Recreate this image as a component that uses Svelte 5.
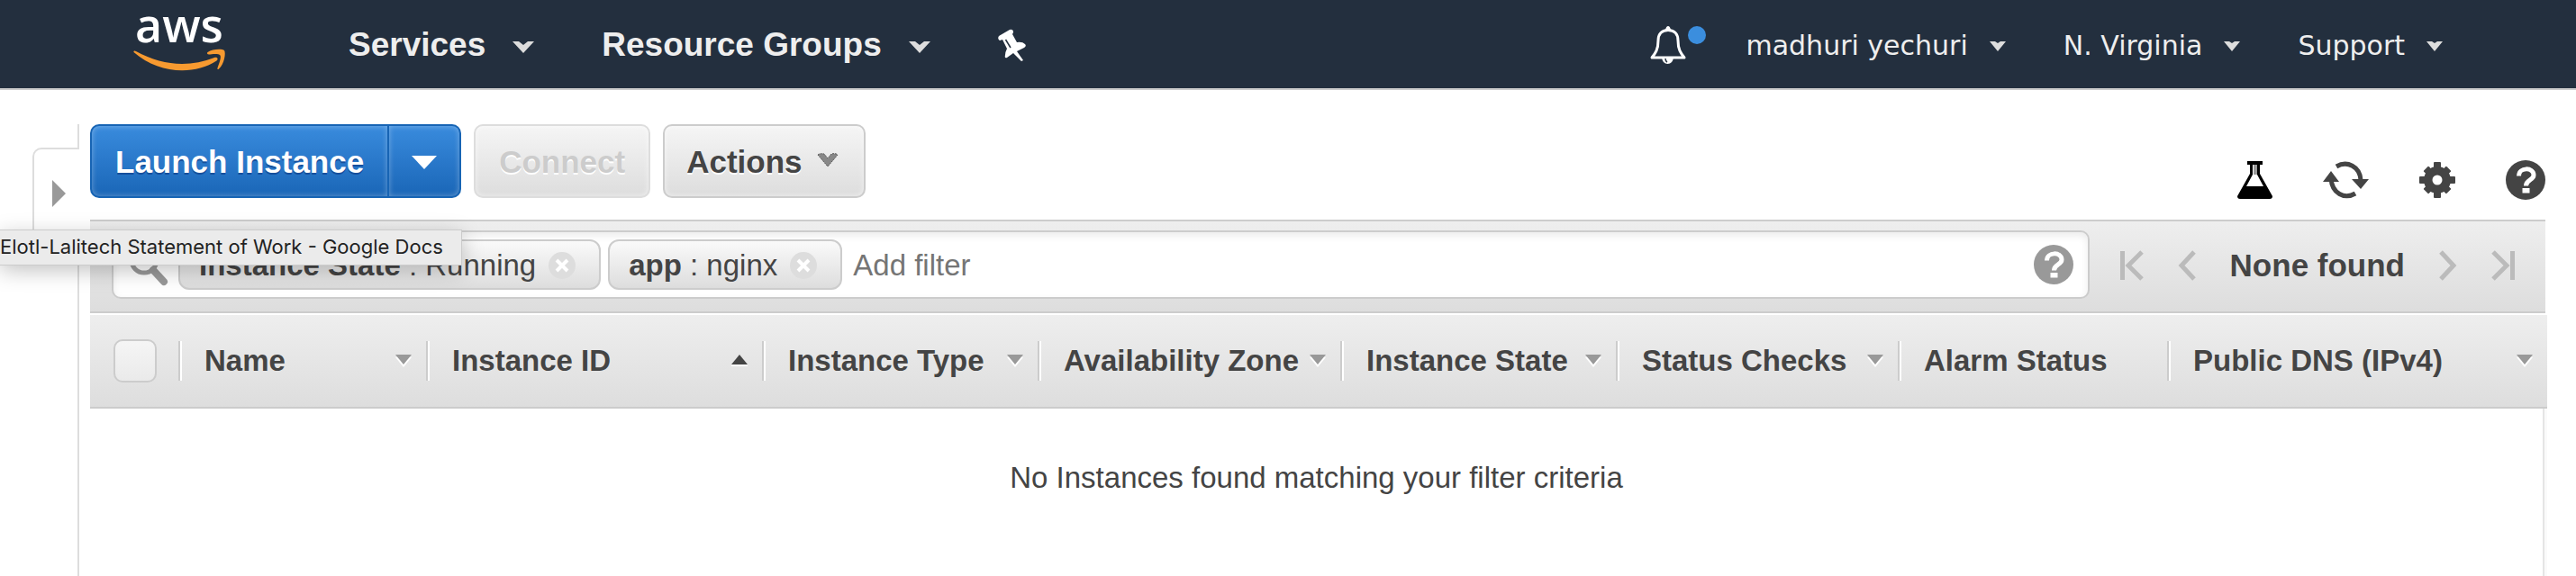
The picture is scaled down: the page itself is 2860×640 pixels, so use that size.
<script>
  const columns = [
    { name: 'Name', sort: 'down' },
    { name: 'Instance ID', sort: 'up' },
    { name: 'Instance Type', sort: 'down' },
    { name: 'Availability Zone', sort: 'down' },
    { name: 'Instance State', sort: 'down' },
    { name: 'Status Checks', sort: 'down' },
    { name: 'Alarm Status', sort: '' },
    { name: 'Public DNS (IPv4)', sort: 'down' }
  ];
  const widths = [98, 275, 373, 306, 336, 306, 313, 299, 422];
  const total = widths.reduce((a, b) => a + b, 0);
  const filters = [
    { key: 'Instance State', value: 'Running' },
    { key: 'app', value: 'nginx' }
  ];
  const account = ['madhuri yechuri', 'N. Virginia', 'Support'];
</script>

{#snippet help()}
  <svg class="help" viewBox="0 0 44 44" aria-hidden="true">
    <circle cx="22" cy="22" r="22" fill="currentColor" />
    <path d="M14.500 17.500C14.500 7.500 31 7.500 31 16.500C31 22.500 22.500 21.500 22.500 28.500" fill="none" stroke="#fff" stroke-width="5" />
    <rect x="18.500" y="31" width="8" height="5.500" fill="#fff" />
  </svg>
{/snippet}

<header>
  <a class="logo" href="#home" aria-label="aws">
    <span>aws</span>
    <svg viewBox="0 0 102 24" aria-hidden="true">
      <path fill="#f79a30" d="M0.500 3C0 1.500 1.500 1 3 2C32 18 62 20 90 9C93 8 95 10.500 92.500 12.500C67 29 28 27 0.500 3Z" />
      <path fill="#f79a30" d="M82.500 3C88-1 99-1 101 1C103 4 101 16 95 21.500C94 22.500 93 22 93.500 20.500C95 16 98 9 96.500 6.500C95 4 87 5 84 5.500C82 5.500 81.500 4 82.500 3Z" />
    </svg>
  </a>
  <nav class="main-nav">
    {#each ['Services', 'Resource Groups'] as item}
      <button>
        {item}
        <svg class="nav-caret" viewBox="0 0 24 13" aria-hidden="true"><path d="M0 0H7L12 4L17 0H24L12 13Z" fill="#ddd" /></svg>
      </button>
    {/each}
    <button aria-label="Pin shortcuts">
      <svg class="pin" viewBox="0 0 31 35" aria-hidden="true">
        <path fill="#fff" d="M1 7L13 0Q17-1 17 3L16 5L21 14Q27 13 30 16Q32 18 29 20L21 24L28 34L26 35L17 26L10 31Q7 32 8 28Q8 25 10 21L5 11L2 12Q-1 10 1 7Z" />
        <path d="M8.500 11L14 20" stroke="#232f3e" stroke-width="1.500" />
      </svg>
    </button>
  </nav>
  <nav class="user-nav">
    <button class="bell" aria-label="Notifications">
      <svg viewBox="0 0 62 42" aria-hidden="true">
        <path d="M20 4.500C12 4.500 9 10 9 16C9 26 6 30 2 35H38C34 30 31 26 31 16C31 10 28 4.500 20 4.500Z" fill="none" stroke="#fff" stroke-width="3" stroke-linejoin="round" />
        <path d="M17 4Q18 0 20 0Q22 0 23 4ZM13 35H26Q25 42 19.500 42Q14 42 13 35Z" fill="#fff" />
        <path d="M17 36Q17 39 19 40" fill="none" stroke="#232f3e" stroke-width="1.500" />
        <circle cx="52" cy="10" r="10" fill="#3b8ede" />
      </svg>
    </button>
    {#each account as item}
      <button>
        {item}
        <svg class="user-caret" viewBox="0 0 18 11" aria-hidden="true"><path d="M0 0H6L9 2L12 0H18L9 11Z" fill="#ddd" /></svg>
      </button>
    {/each}
  </nav>
</header>

<div class="page">
  <aside>
    <div class="rail-top"></div>
    <button class="expand" aria-label="Expand navigation">
      <svg viewBox="0 0 15 30" aria-hidden="true"><path d="M0 0L15 15L0 30Z" fill="#999" /></svg>
    </button>
    <div class="rail"></div>
  </aside>

  <main>
    <div class="toolbar">
      <div class="split">
        <button class="btn primary">Launch Instance</button>
        <button class="btn primary more" aria-label="More launch options">
          <svg viewBox="0 0 28 15" aria-hidden="true"><path d="M0 0H28L14 15Z" fill="#fff" /></svg>
        </button>
      </div>
      <button class="btn off" disabled>Connect</button>
      <button class="btn actions">
        Actions
        <svg viewBox="0 0 24 16" aria-hidden="true"><path d="M1 2Q3 0 8 1L12 6L16 1Q21 0 23 2L12 15Z" fill="#888" stroke="#555" stroke-width="1" stroke-dasharray="2 1" /></svg>
      </button>
      <div class="tools">
        <button aria-label="Experiments">
          <svg class="flask" viewBox="0 0 39 42" aria-hidden="true">
            <path d="M11 0H28V4H25V14L39 39Q39 42 36 42H3Q0 42 0 39L14 14V4H11Z" fill="#000" />
            <path d="M17 4H22V15L29 28H10L17 15Z" fill="#fff" />
            <path d="M18 4H22V15H18Z" fill="#999" />
          </svg>
        </button>
        <button aria-label="Refresh">
          <svg class="refresh" viewBox="0 0 51 42" aria-hidden="true">
            <path d="M15 6C27-1 41 6 42 21M36 36C24 43 10 36 9 19" fill="none" stroke="#444" stroke-width="5" />
            <path d="M32 20H51L42 31ZM0 23L9 11L18 23Z" fill="#444" />
          </svg>
        </button>
        <button aria-label="Settings">
          <svg class="gear" viewBox="-20 -21 40 42" aria-hidden="true">
            <circle r="15" fill="#444" />
            {#each [0, 45, 90, 135] as angle}
              <rect x="-4" y={angle % 90 ? -18 : -20} width="8" height={angle % 90 ? 36 : 40} rx="1" fill="#444" transform="rotate({angle})" />
            {/each}
            <circle r="5.500" fill="#fff" />
          </svg>
        </button>
        <button class="dark" aria-label="Help">{@render help()}</button>
      </div>
    </div>

    <div class="filterbar">
      <div class="search">
        <svg class="lens" viewBox="0 0 44 48" aria-hidden="true">
          <circle cx="18" cy="19" r="14" fill="none" stroke="#999" stroke-width="5" />
          <path d="M28 30L40 43" stroke="#999" stroke-width="8" stroke-linecap="round" />
        </svg>
        {#each filters as filter}
          <span class="chip">
            <span><b>{filter.key}</b> : {filter.value}</span>
            <button aria-label="Remove {filter.key} filter">
              <svg viewBox="0 0 30 30" aria-hidden="true">
                <circle cx="15" cy="15" r="15" fill="#ddd" />
                <path d="M9 9L21 21M21 9L9 21" stroke="#fff" stroke-width="4" />
              </svg>
            </button>
          </span>
        {/each}
        <input type="text" placeholder="Add filter" aria-label="Add filter" />
        <button class="grey" aria-label="Filter help">{@render help()}</button>
      </div>
      <div class="pager">
        <button aria-label="First page"><svg viewBox="0 0 26 32" width="26"><path d="M2.500 0V32M24 1L9 16L24 31" /></svg></button>
        <button aria-label="Previous page"><svg viewBox="0 0 18 32" width="18"><path d="M17 1L3 16L17 31" /></svg></button>
        <strong>None found</strong>
        <button aria-label="Next page"><svg viewBox="0 0 18 32" width="18"><path d="M1 1L15 16L1 31" /></svg></button>
        <button aria-label="Last page"><svg viewBox="0 0 26 32" width="26"><path d="M23.500 0V32M2 1L17 16L2 31" /></svg></button>
      </div>
    </div>

    <table>
      <colgroup>
        {#each widths as width}
          <col style="width: {(width / total) * 100}%" />
        {/each}
      </colgroup>
      <thead>
        <tr>
          <th><div class="check"><input type="checkbox" aria-label="Select all instances" /></div></th>
          {#each columns as column}
            <th>
              <div class="cell">
                <span>{column.name}</span>
                {#if column.sort === 'down'}
                  <svg class="sort" viewBox="0 0 18 14" aria-hidden="true"><path d="M0 3H18L9 14Z" fill="#fff" /><path d="M0 0H18L9 11Z" fill="#999" /></svg>
                {:else if column.sort === 'up'}
                  <svg class="sort" viewBox="0 0 18 14" aria-hidden="true"><path d="M0 11H18V13H0Z" fill="#fff" /><path d="M0 11H18L9 0Z" fill="#444" /></svg>
                {/if}
              </div>
            </th>
          {/each}
        </tr>
      </thead>
      <tbody>
        <tr><td colspan="9">No Instances found matching your filter criteria</td></tr>
      </tbody>
    </table>
  </main>
</div>

<div class="status" role="status">Elotl-Lalitech Statement of Work - Google Docs</div>

<style>
  :global(body) {
    background: #fff;
    color: #444;
    font-family: "Liberation Sans", Arial, sans-serif;
    font-size: 33px;
  }
  :global(html, body, #app) { height: 100%; }
  :global(#app) { display: flex; flex-direction: column; position: relative; overflow: hidden; }
  svg { display: block; flex: none; overflow: visible; }
  button {
    display: flex;
    align-items: center;
    margin: 0;
    padding: 0;
    border: 0;
    background: none;
    color: inherit;
    font: inherit;
    white-space: nowrap;
  }

  header {
    display: flex;
    align-items: center;
    box-sizing: border-box;
    height: 100px;
    padding: 0 148px;
    flex: none;
    background: #232f3e;
    border-bottom: 2px solid #ccc;
    color: #eee;
  }
  .logo {
    display: flex;
    flex-direction: column;
    align-items: center;
    gap: 3px;
    width: 102px;
    padding-bottom: 17px;
    color: #fff;
    font: 600 52px/50px "Open Sans", sans-serif;
    text-decoration: none;
  }
  .logo svg { width: 102px; height: 24px; }
  .main-nav { display: flex; align-items: center; margin-left: 137px; padding-top: 2px; font-size: 37px; font-weight: bold; text-shadow: 0 2px 0 #000; }
  .main-nav button { margin-right: 75px; }
  .nav-caret { width: 24px; height: 13px; margin-left: 30px; margin-top: 4px; }
  .pin { width: 31px; height: 35px; }
  .user-nav { display: flex; align-items: center; margin-left: auto; padding-top: 2px; font: 30px "DejaVu Sans", Verdana, sans-serif; text-shadow: 0 2px 0 #000; }
  .user-nav button { margin-left: 64px; }
  .user-nav button.bell + button { margin-left: 44px; }
  .bell svg { width: 62px; height: 42px; }
  .user-caret { width: 18px; height: 11px; margin-left: 24px; margin-top: 2px; }

  .page { display: flex; flex: 1; padding: 38px 32px 0 36px; }
  aside { display: flex; flex-direction: column; width: 52px; flex: none; margin-right: 12px; }
  .rail-top { height: 26px; border-right: 2px solid #ddd; }
  .expand {
    box-sizing: border-box;
    width: 100%;
    height: 102px;
    padding-left: 20px;
    border: 2px solid #ddd;
    border-right: 0;
    border-radius: 10px 0 0 10px;
  }
  .expand svg { width: 15px; height: 30px; }
  .rail { flex: 1; border-right: 2px solid #ddd; }

  main { display: flex; flex-direction: column; flex: 1; min-width: 0; }
  .toolbar { display: flex; align-items: flex-start; height: 106px; gap: 14px; }
  .split { display: flex; }
  .btn {
    box-sizing: border-box;
    height: 82px;
    padding: 2px 26px 0;
    border: 2px solid #ccc;
    border-radius: 10px;
    background: linear-gradient(#f5f5f5, #ddd);
    box-shadow: inset 0 0 6px rgba(255, 255, 255, 0.6);
    font-size: 35px;
    font-weight: bold;
    text-shadow: 0 2px 0 #fff;
  }
  .primary {
    border-color: #1764b4;
    border-radius: 10px 0 0 10px;
    background: linear-gradient(#398bdd, #1a66b7);
    box-shadow: inset 0 0 6px rgba(255, 255, 255, 0.35);
    color: #fff;
    text-shadow: 0 2px 0 #164f9c;
  }
  .more { padding: 2px 25px 0; border-left: 0; border-radius: 0 10px 10px 0; }
  .more svg { width: 28px; height: 15px; }
  .off { border-color: #ddd; color: #ccc; }
  .actions { padding: 2px 28px 0 24px; }
  .actions svg { width: 24px; height: 16px; margin: 0 0 4px 16px; }
  .tools { display: flex; align-items: center; gap: 56px; height: 44px; margin: 40px 2px 0 auto; }
  .flask { width: 39px; height: 42px; }
  .refresh { width: 51px; height: 42px; }
  .gear { width: 40px; height: 42px; }
  .help { width: 44px; height: 44px; }
  .dark { color: #444; }
  .grey { color: #999; }

  .filterbar {
    display: flex;
    align-items: center;
    box-sizing: border-box;
    height: 104px;
    margin: 0 2px 2px 0;
    padding: 0 34px 4px 24px;
    border: solid #ccc;
    border-width: 2px 0;
    background: linear-gradient(#eee, #ddd);
  }
  .search {
    display: flex;
    align-items: center;
    flex: 1;
    box-sizing: border-box;
    height: 76px;
    gap: 8px;
    padding: 0 16px;
    border: 2px solid #ccc;
    border-radius: 10px;
    background: #fff;
    box-shadow: inset 0 4px 8px rgba(0, 0, 0, 0.08);
  }
  .lens { width: 44px; height: 48px; margin-right: 4px; }
  .chip {
    display: flex;
    align-items: center;
    box-sizing: border-box;
    height: 56px;
    gap: 14px;
    padding: 2px 26px 0 21px;
    border: 2px solid #ccc;
    border-radius: 12px;
    background: linear-gradient(#fafafa, #ddd);
    white-space: nowrap;
  }
  .chip svg { width: 30px; height: 30px; }
  .search input {
    flex: 1;
    min-width: 0;
    padding: 2px 4px 0;
    border: 0;
    outline: 0;
    background: none;
    color: #444;
    font: 33px "Liberation Sans", Arial, sans-serif;
  }
  .search input::placeholder { color: #757575; opacity: 1; }
  .pager { display: flex; align-items: center; gap: 39px; margin-left: 34px; padding-top: 2px; font-size: 35px; }
  .pager svg { height: 32px; fill: none; stroke: #bbb; stroke-width: 5; }

  table { width: 100%; table-layout: fixed; border-spacing: 0; }
  thead tr { background: linear-gradient(#eee, #ddd); }
  th { height: 102px; padding: 0; border-bottom: 2px solid #ccc; font-weight: bold; text-align: left; white-space: nowrap; }
  .cell {
    display: flex;
    align-items: center;
    justify-content: space-between;
    height: 44px;
    padding: 0 16px 0 27px;
    border-left: 2px solid #ccc;
    box-shadow: inset 2px 0 0 #fff;
  }
  .sort { width: 18px; height: 14px; }
  .check { padding-left: 26px; }
  .check input {
    display: block;
    appearance: none;
    box-sizing: border-box;
    width: 48px;
    height: 48px;
    margin: 0;
    border: 2px solid #ccc;
    border-radius: 10px;
    background: linear-gradient(#f5f5f5, #eaeaea);
  }
  td {
    height: 128px;
    padding: 58px 5px 0 0;
    box-shadow: inset -3px 0 0 #fafafa, inset -5px 0 0 #e5e5e5;
    text-align: center;
    vertical-align: top;
  }

  .status {
    position: absolute;
    left: 0;
    top: 256px;
    box-sizing: border-box;
    height: 38px;
    padding: 0 20px 0 0;
    background: #ebebeb;
    box-shadow: 0 0 0 1px #ccc, 0 6px 24px rgba(0, 0, 0, 0.25);
    color: #222;
    font: 22px/36px Inter, sans-serif;
    white-space: nowrap;
  }
</style>
